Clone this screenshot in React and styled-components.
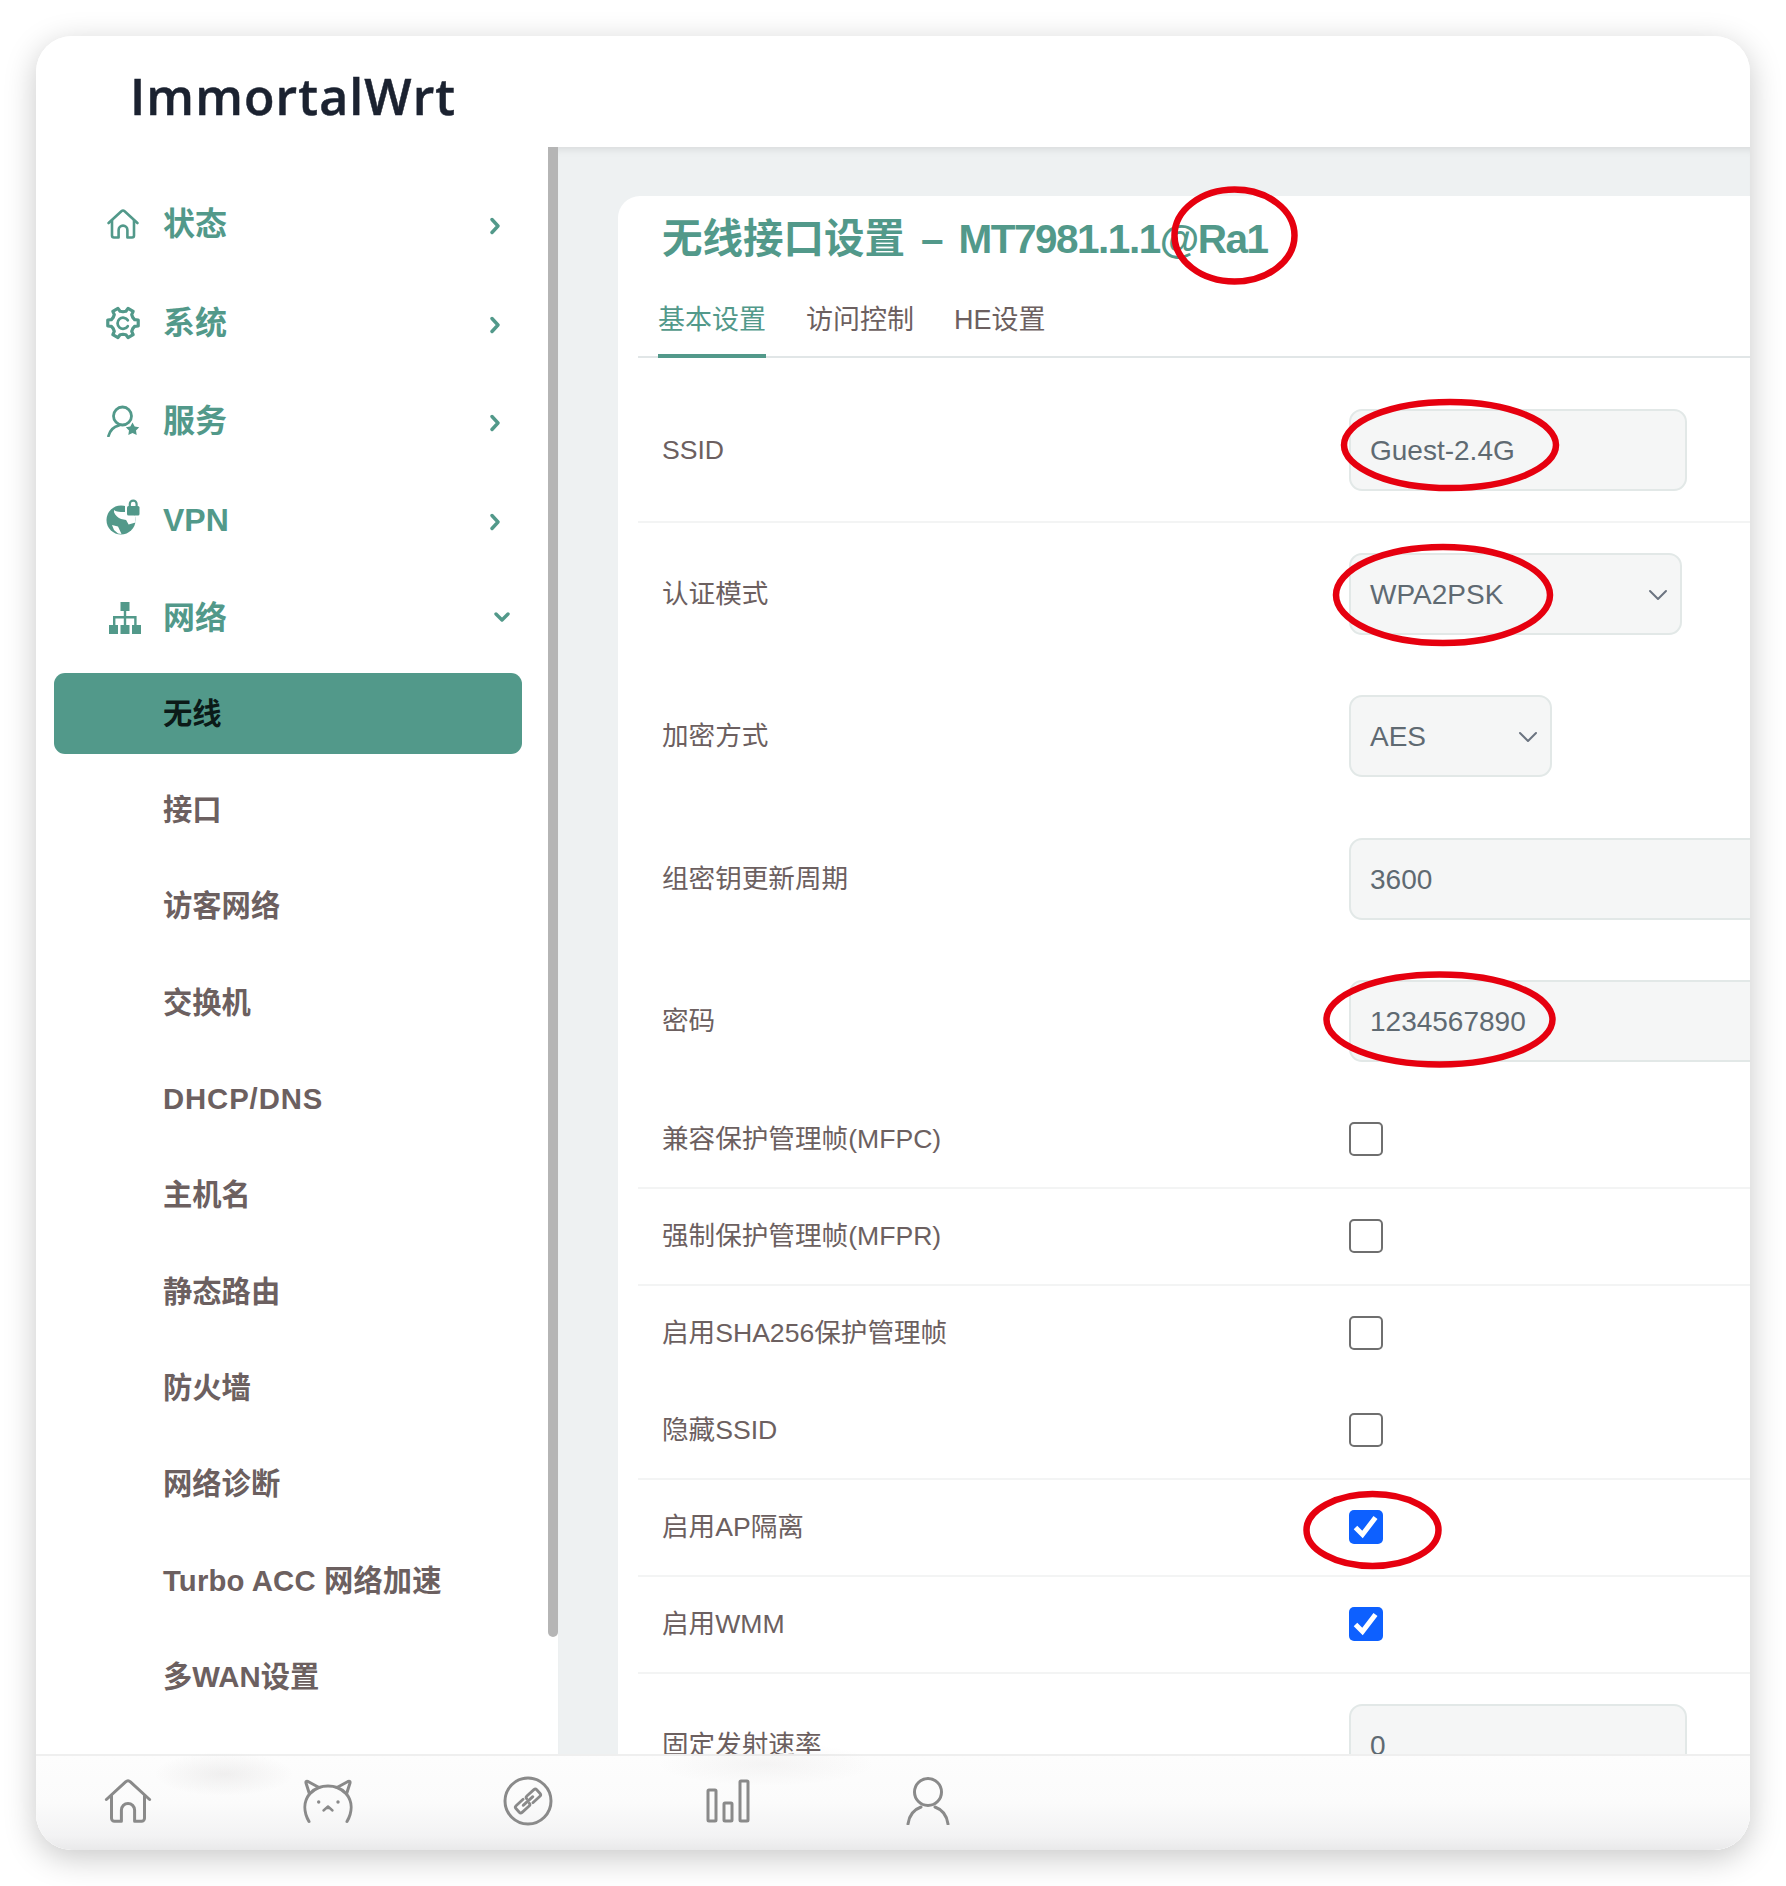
import React from 'react';
import styled, { createGlobalStyle } from 'styled-components';

const GREEN = '#52998a';
const TEXT = '#6c6060';
const SANS = '"Liberation Sans", "Noto Sans CJK SC", sans-serif';

const Global = createGlobalStyle`
  html, body { margin: 0; padding: 0; background: #fff; }
  * { box-sizing: border-box; }
  #root { width: 1786px; height: 1886px; padding: 36px; overflow: hidden; font-family: ${SANS}; }
`;

const Stack = styled.div`position: relative; width: 1714px; height: 1814px;`;
const Layer = styled.div`position: absolute; inset: 0;`;
const Frame = styled.div`
  position: relative; width: 1714px; height: 1814px; background: #fff; border-radius: 36px;
  overflow: hidden; display: flex; flex-direction: column;
`;
const Shadow = styled.div`
  width: 1714px; height: 1814px; border-radius: 36px;
  box-shadow: 0 8px 32px rgba(0,0,0,.22);
`;
const Header = styled.header`
  flex: none; height: 111px; display: flex; align-items: center; padding: 0 0 0 94px;
`;
const Logo = styled.div`
  font-family: "Open Sans", "Noto Sans", sans-serif; font-weight: 600; font-size: 50px;
  letter-spacing: 1.1px; color: #1b2230; line-height: 1; margin-top: 8px; -webkit-text-stroke: .5px #1b2230;
`;
const Body = styled.div`flex: 1; min-height: 0; display: flex;`;
const Sidebar = styled.nav`
  position: relative; flex: none; width: 522px; padding: 28px 0 0 18px; overflow: hidden;
`;
const Thumb = styled.div`
  position: absolute; left: 512px; top: 0; width: 10px; height: 1490px; background: #b5b5b5;
  border-radius: 0 0 5px 5px;
`;
const TopItem = styled.div`
  width: 468px; height: 98.5px; display: flex; align-items: center; padding: 0 ${p => p.$open ? 12 : 22}px 0 53px;
  color: ${GREEN}; font-size: 32px; font-weight: 700; line-height: 1;
`;
const IconSlot = styled.span`
  flex: none; width: 32px; height: 32px; margin-right: 24px; display: flex; align-items: center; justify-content: center;
  color: ${GREEN};
  svg { display: block; flex: none; }
`;
const Chev = styled.svg`
  margin-left: auto; margin-top: ${p => p.$mt}px; display: block; fill: none; stroke: ${GREEN};
  stroke-width: 3.4; stroke-linecap: round; stroke-linejoin: round;
`;
const SubList = styled.div`display: flex; flex-direction: column; gap: 15.3px; margin-top: 5.5px;`;
const SubItem = styled.div`
  flex: none; width: 468px; height: 81px; border-radius: 11px; display: flex; align-items: center; padding-left: 109px;
  font-size: 29.3px; font-weight: 700; line-height: 1; color: ${p => p.$active ? '#0b1a18' : TEXT};
  background: ${p => p.$active ? GREEN : 'transparent'};
  letter-spacing: ${p => p.$ls || 0}px; white-space: nowrap;
`;
const Main = styled.main`
  flex: 1; min-width: 0; background: #eef1f2; padding: 49px 0 0 60px; overflow: hidden;
  box-shadow: inset 0 9px 8px -7px rgba(0,0,0,.1);
`;
const Card = styled.section`
  background: #fff; border-radius: 22px 0 0 0; height: 1700px; padding-left: 20px;
`;
const Title = styled.h1`
  margin: 0; height: 84px; padding: 2px 0 0 24px; display: flex; align-items: center;
  font-size: 40.5px; font-weight: 700; line-height: 1; color: ${GREEN}; white-space: nowrap;
`;
const TitleDash = styled.span`margin: 0 15px 0 16px;`;
const TitleCode = styled.span`letter-spacing: -1.5px;`;
const Tabs = styled.div`
  height: 78px; display: flex; gap: 40px; padding-left: 20px; border-bottom: 2px solid #e1e6e7;
`;
const Tab = styled.div`
  height: 78px; display: flex; align-items: center; padding-top: 6px; font-size: 27px; line-height: 1;
  color: ${p => p.$active ? GREEN : TEXT};
  border-bottom: 4px solid ${p => p.$active ? GREEN : 'transparent'};
  white-space: nowrap;
`;
const Row = styled.div`
  display: grid; grid-template-columns: 687px 1fr; padding-left: 24px;
  height: ${p => p.$h}px; padding-top: ${p => p.$pt}px;
  align-items: ${p => p.$pt ? 'start' : 'center'};
  border-bottom: 2px solid ${p => p.$line ? '#f3f4f4' : 'transparent'};
`;
const Label = styled.div`
  font-size: 26.6px; line-height: 83px; color: ${TEXT}; white-space: nowrap;
`;
const Field = styled.div`
  height: 82px; width: ${p => p.$w}px; background: #f5f6f6; border: 2px solid #e2e8e7; border-radius: 13px;
  display: flex; align-items: center; justify-content: space-between; padding: 1px 12px 0 19px;
  font-size: 28px; color: #5f6a72; line-height: 1;
`;
const FieldChev = styled.svg`display: block; fill: none; stroke: #6b7480; stroke-width: 2; stroke-linecap: round; stroke-linejoin: round;`;
const Box = styled.span`
  display: flex; align-items: center; justify-content: center; width: 34px; height: 34px; border-radius: 5px;
  margin-top: -1px;
  border: ${p => p.$on ? 'none' : '2px solid #6f6f6f'}; background: ${p => p.$on ? '#0d60ff' : '#fff'};
`;
const BottomBar = styled.footer`
  position: absolute; left: 0; right: 0; bottom: 0; height: 96px;
  border-top: 2px solid #efefef;
  background: linear-gradient(to bottom, #fdfdfd 0%, #fbfbfb 50%, #f3f3f4 85%, #e9e9ea 100%);
  display: flex; gap: 16px; align-items: center;
`;
const Smudge = styled.div`
  position: absolute; top: ${p => p.$y}px; left: ${p => p.$x}px; width: ${p => p.$w}px; height: 44px;
  background: radial-gradient(closest-side, rgba(90,80,80,${p => p.$a}), rgba(90,80,80,0));
`;
const BarItem = styled.div`
  position: relative; width: 184px; display: flex; justify-content: center; color: #8a8a8a; margin-top: -5px;
  svg { display: block; }
`;
const Marks = styled.svg`
  position: absolute; left: 0; top: 0; width: 1714px; height: 1814px; pointer-events: none;
  fill: none; stroke: #e6000f; stroke-width: 6.5;
`;

const HomeIcon = ({ size = 32, w = 2.6 }) => (
  <svg width={size} height={size} viewBox="0 0 32 32" fill="none" stroke="currentColor" strokeWidth={w} strokeLinecap="round" strokeLinejoin="round">
    <path d="M1.6 15 14.4 3.2a2.4 2.4 0 0 1 3.2 0L30.4 15" />
    <path d="M5 12.5V27.500a2 2 0 0 0 2 2h4.600V22a4.400 4.400 0 0 1 8.800 0v7.500H25a2 2 0 0 0 2-2V12.500" />
  </svg>
);

const gearPath = (() => {
  const pt = (r, deg) => {
    const a = (deg * Math.PI) / 180;
    return `${(16 + r * Math.cos(a)).toFixed(2)} ${(16 + r * Math.sin(a)).toFixed(2)}`;
  };
  let d = '';
  for (let i = 0; i < 6; i++) {
    const c = i * 60;
    d += `${i ? 'L' : 'M'}${pt(10.6, c - 30)} L${pt(11.4, c - 16)} L${pt(14.6, c - 11)} L${pt(14.6, c + 11)} L${pt(11.4, c + 16)} `;
  }
  return d + 'Z';
})();
const GearIcon = () => (
  <svg width="34" height="34" viewBox="0 0 32 32" fill="none" stroke="currentColor" strokeWidth="3" strokeLinejoin="round" strokeLinecap="round">
    <path d={gearPath} />
    <path d="M20.500 13.500A5.200 5.200 0 1 0 20.500 19" strokeWidth="2.600" />
  </svg>
);
const ServiceIcon = () => (
  <svg width="33" height="32" viewBox="0 0 33 32" fill="none" stroke="currentColor" strokeWidth="2.800" strokeLinecap="round">
    <circle cx="15.500" cy="11" r="9" />
    <path d="M1.500 31c1.400-5.600 5.200-9.200 10.400-10.600" />
    <path fill="currentColor" stroke="none" d="M25.500 17.500l2.200 4 4.500.8-3.200 3.200.7 4.500-4.200-2-4.200 2 .7-4.500-3.200-3.200 4.500-.8z" />
  </svg>
);
const VpnIcon = () => (
  <svg width="34" height="36" viewBox="0 0 34 36" style={{ marginTop: -6 }}>
    <circle cx="15" cy="21" r="14.500" fill="currentColor" />
    <path fill="#fff" d="M8 11c4 3 9 1.500 15 2.500l6 3 .6 7-7 2-2.500-4.500-5-1c-3-1-5.500-3.500-7-6.500zM6 26l6 1.500 3.500 7.500-3.500-.6-4-3.400z" />
    <path fill="#fff" d="M19 7h15v9h-15z" />
    <rect x="21" y="7" width="12.500" height="9.500" rx="1.500" fill="currentColor" />
    <path fill="none" stroke="currentColor" strokeWidth="2.200" d="M23.800 8V5a3.400 3.400 0 0 1 6.800 0v3" />
  </svg>
);
const NetIcon = () => (
  <svg width="33" height="32" viewBox="0 0 33 32" fill="currentColor" style={{ marginLeft: 3 }}>
    <rect x="12.500" y="0" width="9" height="9" />
    <rect x="1" y="23" width="9" height="9" />
    <rect x="12.500" y="23" width="9" height="9" />
    <rect x="24" y="23" width="9" height="9" />
    <path d="M15.800 9h2.400v5h10.400v9h-2.400v-6.600H18.200V23h-2.400v-6.600H7.400V23H5v-9h10.800z" />
  </svg>
);
const CatIcon = () => (
  <svg width="52" height="48" viewBox="12 10 52 48" fill="none" stroke="currentColor" strokeWidth="3" strokeLinecap="round" strokeLinejoin="round">
    <path d="M19 54.500C13 44 14 34 19.500 27L16 16Q15.500 13.500 18 14.500L29 20.500C34 18.500 42 18.500 47 20.500L58 14.500Q60.500 13.500 60 16L56.500 27C62 34 63 44 57 54.500" />
    <path d="M19.500 27Q23.500 22.500 29 20.500M56.500 27Q52.500 22.500 47 20.500" />
    <circle cx="28.700" cy="35" r="1.700" fill="currentColor" stroke="none" />
    <circle cx="48" cy="35" r="1.700" fill="currentColor" stroke="none" />
    <path d="M33.500 43.500L38 39.500l4.500 4M38 39.500v1.500" strokeWidth="2.400" />
  </svg>
);
const LinkCircleIcon = () => (
  <svg width="50" height="50" viewBox="0 0 50 50" fill="none" stroke="currentColor" strokeWidth="3" strokeLinecap="round" strokeLinejoin="round">
    <circle cx="25" cy="25" r="23" />
    <g transform="rotate(-42 25 25)" strokeWidth="2.800">
      <path d="M22.500 20.500H13a2 2 0 0 0-2 2v5a2 2 0 0 0 2 2h9.500a2 2 0 0 0 2-2" />
      <path d="M27.500 29.500H37a2 2 0 0 0 2-2v-5a2 2 0 0 0-2-2h-9.500a2 2 0 0 0-2 2" />
      <path d="M18.500 25H31.500" />
    </g>
  </svg>
);
const BarsIcon = () => (
  <svg width="44" height="44" viewBox="0 0 44 44" fill="none" stroke="currentColor" strokeWidth="3" strokeLinejoin="round">
    <rect x="2" y="11" width="8" height="31" rx="1" />
    <rect x="18" y="24" width="8" height="18" rx="1" />
    <rect x="34" y="2" width="8" height="40" rx="1" />
  </svg>
);
const UserIcon = () => (
  <svg width="44" height="48" viewBox="0 0 44 48" fill="none" stroke="currentColor" strokeWidth="3" strokeLinecap="round">
    <ellipse cx="22" cy="15" rx="13.500" ry="13.500" />
    <path d="M2 47c1.200-9 6-14.500 13-17M42 47c-1.200-9-6-14.500-13-17" />
  </svg>
);

const Right = () => <Chev $mt={4} width="10" height="18" viewBox="0 0 10 18"><path d="M2 2.500l6 6.500-6 6.500" /></Chev>;
const Down = () => <Chev $mt={-2} width="16" height="11" viewBox="0 0 16 11"><path d="M2 2l6 6 6-6" /></Chev>;
const SelectChev = () => <FieldChev width="20" height="12" viewBox="0 0 20 12"><path d="M2 2l8 8 8-8" /></FieldChev>;
const Tick = () => (
  <svg width="34" height="34" viewBox="0 0 34 34" fill="none" stroke="#fff" strokeWidth="5"><path d="M6.500 17.500l7 7 13-17" /></svg>
);

const subs = [['接口'], ['访客网络'], ['交换机'], ['DHCP/DNS', .9], ['主机名'], ['静态路由'], ['防火墙'], ['网络诊断'], ['Turbo ACC 网络加速', .15], ['多WAN设置']];
const checks = [
  ['兼容保护管理帧(MFPC)', false, true],
  ['强制保护管理帧(MFPR)', false, true],
  ['启用SHA256保护管理帧', false, false],
  ['隐藏SSID', false, true],
  ['启用AP隔离', true, true],
  ['启用WMM', true, true],
];

export default function App() {
  return (
    <>
      <Global />
      <Stack>
        <Layer><Shadow /></Layer>
        <Layer>
          <Frame>
            <Header><Logo>ImmortalWrt</Logo></Header>
            <Body>
              <Sidebar>
                <Thumb />
                <TopItem><IconSlot><HomeIcon /></IconSlot>状态<Right /></TopItem>
                <TopItem><IconSlot><GearIcon /></IconSlot>系统<Right /></TopItem>
                <TopItem><IconSlot><ServiceIcon /></IconSlot>服务<Right /></TopItem>
                <TopItem><IconSlot><VpnIcon /></IconSlot>VPN<Right /></TopItem>
                <TopItem $open><IconSlot><NetIcon /></IconSlot>网络<Down /></TopItem>
                <SubList>
                  <SubItem $active>无线</SubItem>
                  {subs.map(([s, ls]) => <SubItem key={s} $ls={ls}>{s}</SubItem>)}
                </SubList>
              </Sidebar>
              <Main>
                <Card>
                  <Title>无线接口设置<TitleDash>–</TitleDash><TitleCode>MT7981.1.1@Ra1</TitleCode></Title>
                  <Tabs>
                    <Tab $active>基本设置</Tab>
                    <Tab>访问控制</Tab>
                    <Tab>HE设置</Tab>
                  </Tabs>
                  <Row $h={165} $pt={51} $line>
                    <Label>SSID</Label>
                    <Field $w={338}>Guest-2.4G</Field>
                  </Row>
                  <Row $h={142} $pt={30}>
                    <Label>认证模式</Label>
                    <Field $w={333}>WPA2PSK<SelectChev /></Field>
                  </Row>
                  <Row $h={143} $pt={30}>
                    <Label>加密方式</Label>
                    <Field $w={203}>AES<SelectChev /></Field>
                  </Row>
                  <Row $h={142} $pt={30}>
                    <Label>组密钥更新周期</Label>
                    <Field $w={520}>3600</Field>
                  </Row>
                  <Row $h={142} $pt={30}>
                    <Label>密码</Label>
                    <Field $w={520}>1234567890</Field>
                  </Row>
                  {checks.map(([label, on, line]) => (
                    <Row key={label} $h={97} $line={line}>
                      <Label>{label}</Label>
                      <Box $on={on}>{on && <Tick />}</Box>
                    </Row>
                  ))}
                  <Row $h={142} $pt={30}>
                    <Label>固定发射速率</Label>
                    <Field $w={338}>0</Field>
                  </Row>
                </Card>
              </Main>
            </Body>
            <BottomBar>
              <Smudge $x={118} $y={-4} $w={140} $a={.08} />
              <Smudge $x={620} $y={-14} $w={220} $a={.05} />
              <BarItem><HomeIcon size={48} w={2} /></BarItem>
              <BarItem><CatIcon /></BarItem>
              <BarItem><LinkCircleIcon /></BarItem>
              <BarItem><BarsIcon /></BarItem>
              <BarItem><UserIcon /></BarItem>
            </BottomBar>
            <Marks viewBox="0 0 1714 1814">
              <ellipse cx="1198.500" cy="199.500" rx="60" ry="46" />
              <ellipse cx="1414" cy="409" rx="106" ry="43" />
              <ellipse cx="1407" cy="559" rx="107" ry="48" />
              <ellipse cx="1403.500" cy="983.500" rx="113" ry="45" />
              <ellipse cx="1336.500" cy="1494" rx="66" ry="36" />
            </Marks>
          </Frame>
        </Layer>
      </Stack>
    </>
  );
}
